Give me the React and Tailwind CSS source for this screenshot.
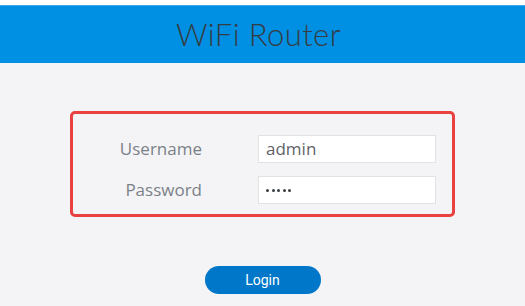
export default function App() {
  return (
    <div className="w-[525px] h-[306px] bg-[#f4f4f6] overflow-hidden flex flex-col items-center" style={{ fontFamily: '"Open Sans", sans-serif' }}>
      <div className="w-full h-[5px] bg-white" />
      <div className="w-full h-[58px] bg-[#0090e3] border-t border-[#3aa9ec] flex items-center justify-center">
        <h1 className="text-[31px] font-light text-[#353d44] tracking-[0.4px] leading-none pb-[1px] pr-[8px]" style={{ fontFamily: 'Lato, sans-serif' }}>WiFi Router</h1>
      </div>
      <div className="mt-[48px] w-[385px] h-[106px] border-[3px] border-[#e8413f] rounded-[5px] pt-[21px] flex flex-col gap-[13px]">
        <div className="flex items-center h-[28px]">
          <label className="w-[129px] text-right text-[17px] text-[#7b8188]">Username</label>
          <div className="ml-[56px] w-[178px] h-[28px] bg-white border border-[#e2e2e2] flex items-center px-[7px] text-[17px] text-[#5f6368]">admin</div>
        </div>
        <div className="flex items-center h-[28px]">
          <label className="w-[129px] text-right text-[17px] text-[#7b8188]">Password</label>
          <div className="ml-[56px] w-[178px] h-[28px] bg-white border border-[#e2e2e2] flex items-center px-[7px] gap-[2.5px]">
            <span className="w-[3px] h-[3px] rounded-full bg-[#3a3f44]" />
            <span className="w-[3px] h-[3px] rounded-full bg-[#3a3f44]" />
            <span className="w-[3px] h-[3px] rounded-full bg-[#3a3f44]" />
            <span className="w-[3px] h-[3px] rounded-full bg-[#3a3f44]" />
            <span className="w-[3px] h-[3px] rounded-full bg-[#3a3f44]" />
          </div>
        </div>
      </div>
      <button className="mt-[49px] w-[116px] h-[28px] rounded-full bg-[#0077c9] text-white text-[14px] leading-none flex items-center justify-center" style={{ fontFamily: 'Roboto, sans-serif' }}>Login</button>
    </div>
  );
}
